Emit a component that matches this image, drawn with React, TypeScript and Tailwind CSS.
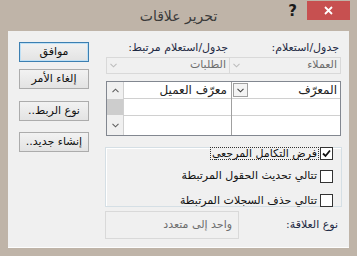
import React from "react";

const font = { fontFamily: '"DejaVu Sans", "Noto Sans", sans-serif' };

function Btn({ label, primary }: { label: string; primary?: boolean }) {
  return (
    <div
      className={
        "w-[70px] h-[20px] flex items-center justify-center text-[11px] text-[#111] bg-gradient-to-b from-[#f2f2f2] to-[#e3e3e3] border " +
        (primary ? "border-[#3c7fb1] shadow-[inset_0_0_0_1px_#bfe0f5]" : "border-[#acacac]")
      }
    >
      <span dir="rtl">{label}</span>
    </div>
  );
}

function Chevron({ className }: { className?: string }) {
  return (
    <svg width="7" height="5" viewBox="0 0 7 5" className={className}>
      <path d="M0.5 0.8 L3.5 3.8 L6.5 0.8" fill="none" stroke="currentColor" strokeWidth="1.1" />
    </svg>
  );
}

function ChevronUp({ className }: { className?: string }) {
  return (
    <svg width="7" height="5" viewBox="0 0 7 5" className={className}>
      <path d="M0.5 4.2 L3.5 1.2 L6.5 4.2" fill="none" stroke="currentColor" strokeWidth="1.1" />
    </svg>
  );
}

function CheckBox({ checked }: { checked?: boolean }) {
  return (
    <div className="w-[13px] h-[13px] border border-[#333] bg-white flex items-center justify-center shrink-0">
      {checked && (
        <svg width="9" height="9" viewBox="0 0 9 9">
          <path d="M1 4.5 L3.5 7 L8 1.5" fill="none" stroke="#111" strokeWidth="1.8" />
        </svg>
      )}
    </div>
  );
}

export default function App() {
  return (
    <div className="w-[357px] h-[256px] bg-[#bfb4a8] flex flex-col" style={font}>
      {/* title bar */}
      <div className="h-[31px] grid grid-cols-[1fr_auto_1fr] items-start">
        <div />
        <div dir="rtl" className="pt-[6px] text-[14px] text-[#3a3a3a] leading-[20px]">
          تحرير علاقات
        </div>
        <div className="flex justify-end items-start pr-[7px] pt-[1px]">
          <span className="mt-[1px] mr-[10px] text-[15px] font-bold text-[#1a1a1a] leading-[18px]">?</span>
          <div className="w-[43px] h-[19px] bg-[#c75050] flex items-center justify-center">
            <svg width="9" height="9" viewBox="0 0 9 9">
              <path d="M1 1 L8 8 M8 1 L1 8" stroke="#fff" strokeWidth="1.8" />
            </svg>
          </div>
        </div>
      </div>

      {/* client panel */}
      <div className="mx-[8px] h-[216px] bg-[#f0f0f0] flex pl-[11px] pt-[11px] pr-[8px] shadow-[0_1px_0_#fdfdfd]">
        {/* buttons */}
        <div className="w-[70px] flex flex-col shrink-0">
          <Btn label="موافق" primary />
          <div className="h-[7px]" />
          <Btn label="إلغاء الأمر" />
          <div className="h-[12px]" />
          <Btn label="نوع الربط.." />
          <div className="h-[11px]" />
          <Btn label="إنشاء جديد.." />
        </div>

        {/* right area */}
        <div className="ml-[17px] w-[235px] flex flex-col">
          {/* labels */}
          <div className="h-[15px] flex text-[11px] text-[#1f2a44] leading-[14px] -mt-[1px]">
            <div className="w-[123px] text-right pr-[1px]" dir="rtl">جدول/استعلام مرتبط:</div>
            <div className="flex-1 text-right pr-[2px]" dir="rtl">جدول/استعلام:</div>
          </div>
          {/* combos */}
          <div className="mt-[1px] h-[17px] flex text-[11px] text-[#6d6d6d]">
            <div className="w-[124px] border border-[#d9d9d9] flex items-center justify-between px-[3px]">
              <Chevron className="text-[#bdbdbd]" />
              <span dir="rtl">الطلبات</span>
            </div>
            <div className="flex-1 border border-l-0 border-[#d9d9d9] flex items-center justify-between px-[3px]">
              <Chevron className="text-[#bdbdbd]" />
              <span dir="rtl">العملاء</span>
            </div>
          </div>
          {/* grid */}
          <div className="mt-[7px] h-[55px] border border-[#828790] bg-white flex">
            <div className="w-[17px] bg-[#f0f0f0] flex flex-col items-center border-r border-[#d0d0d0]">
              <div className="h-[17px] flex items-center justify-center text-[#606060]">
                <ChevronUp />
              </div>
              <div className="w-full h-[16px] bg-[#cdcdcd]" />
              <div className="flex-1 flex items-center justify-center text-[#606060]">
                <Chevron />
              </div>
            </div>
            <div className="w-[108px] flex flex-col border-r border-[#a0a0a0]">
              <div className="h-[17px] border-b border-[#d0d0d0] flex items-center justify-end pr-[4px] text-[12px] text-[#222]">
                <span dir="rtl">معرّف العميل</span>
              </div>
              <div className="h-[17px] border-b border-[#d0d0d0]" />
              <div className="flex-1" />
            </div>
            <div className="flex-1 flex flex-col">
              <div className="h-[17px] border-b border-[#d0d0d0] flex items-center justify-between pl-[1px] pr-[3px] text-[12px] text-[#222]">
                <div className="w-[15px] h-[14px] border border-[#a0a0a0] bg-[#f4f4f4] flex items-center justify-center text-[#444]">
                  <Chevron />
                </div>
                <span dir="rtl">المعرّف</span>
              </div>
              <div className="h-[17px] border-b border-[#d0d0d0]" />
              <div className="flex-1" />
            </div>
          </div>
          {/* group box */}
          <div className="mt-[11px] -ml-[1px] w-[237px] h-[60px] border border-[#d5dfe5] shadow-[inset_1px_1px_0_#fff] flex flex-col items-end pr-[8px]">
            <div className="-mt-[1px] flex items-center bg-[#f0f0f0]">
              <div dir="rtl" className="h-[13px] border border-dotted border-[#333] text-[11px] leading-[11px] px-[1px] text-[#111]">
                فرض التكامل المرجعي
              </div>
              <div className="ml-[1px]"><CheckBox checked /></div>
            </div>
            <div className="mt-[8px] flex items-center gap-[3px]">
              <span dir="rtl" className="text-[11px] text-[#111]">تتالي تحديث الحقول المرتبطة</span>
              <CheckBox />
            </div>
            <div className="mt-[8px] flex items-center gap-[3px]">
              <span dir="rtl" className="text-[11px] text-[#111]">تتالي حذف السجلات المرتبطة</span>
              <CheckBox />
            </div>
          </div>
          {/* relationship type */}
          <div className="mt-[4px] -ml-[1px] flex items-center">
            <div className="w-[134px] h-[28px] border border-[#d9d9d9] flex items-center justify-end pr-[6px] text-[11px] text-[#6d6d6d]">
              <span dir="rtl">واحد إلى متعدد</span>
            </div>
            <div className="flex-1 text-right pr-[3px] text-[11px] text-[#1f2a44]" dir="rtl">نوع العلاقة:</div>
          </div>
        </div>
      </div>
    </div>
  );
}
